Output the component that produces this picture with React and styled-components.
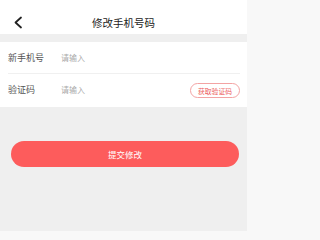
import React from 'react';
import styled, { createGlobalStyle } from 'styled-components';

const GlobalStyle = createGlobalStyle`
  html, body {
    margin: 0;
    padding: 0;
    background: #f8f8f8;
    font-family: "Noto Sans CJK SC", "Noto Sans", sans-serif;
  }
`;

const Page = styled.div`
  width: 247px;
  height: 231px;
  background: #efefef;
  display: flex;
  flex-direction: column;
`;

const Header = styled.div`
  box-sizing: border-box;
  height: 34px;
  padding-top: 10px;
  background: #fff;
  display: flex;
  align-items: center;
  justify-content: center;
  position: relative;
`;

const Back = styled.button`
  position: absolute;
  left: 12px;
  top: 16px;
  width: 12px;
  height: 13px;
  padding: 0;
  border: none;
  background: none;
  display: flex;
`;

const Title = styled.div`
  font-size: 10.5px;
  color: #222;
`;

const Form = styled.div`
  margin-top: 8px;
  background: #fff;
  padding: 0 7px 0 8px;
`;

const Row = styled.div`
  display: flex;
  align-items: center;
  border-bottom: ${(p) => (p.last ? 'none' : '1px solid #f0f0f0')};
  height: ${(p) => (p.last ? '33px' : '32px')};
  padding-bottom: ${(p) => (p.last ? '2px' : '0')};
  box-sizing: border-box;
`;

const Label = styled.div`
  width: 53px;
  font-size: 9px;
  color: #555;
`;

const Placeholder = styled.div`
  flex: 1;
  font-size: 8px;
  color: #aaa;
`;

const CodeButton = styled.button`
  width: 50px;
  height: 15px;
  margin-top: 2px;
  padding: 0;
  border: 1px solid #f3a3a3;
  border-radius: 8px;
  background: #fff;
  color: #ec5f5f;
  font-family: inherit;
  font-size: 6.8px;
  display: flex;
  align-items: center;
  justify-content: center;
`;

const Submit = styled.button`
  margin: 34px 8px 0 11px;
  height: 26px;
  border: none;
  border-radius: 13px;
  background: #fd5c5c;
  color: #fff;
  font-family: inherit;
  font-size: 8.5px;
`;

export default function App() {
  return (
    <>
      <GlobalStyle />
      <Page>
        <Header>
          <Back>
            <svg width="12" height="13" viewBox="0 0 12 13" fill="none">
              <path d="M9 1.5L3.5 6.5L9 11.5" stroke="#222" strokeWidth="1.8" strokeLinecap="round" strokeLinejoin="round" />
            </svg>
          </Back>
          <Title>修改手机号码</Title>
        </Header>
        <Form>
          <Row>
            <Label>新手机号</Label>
            <Placeholder>请输入</Placeholder>
          </Row>
          <Row last>
            <Label>验证码</Label>
            <Placeholder>请输入</Placeholder>
            <CodeButton>获取验证码</CodeButton>
          </Row>
        </Form>
        <Submit>提交修改</Submit>
      </Page>
    </>
  );
}
